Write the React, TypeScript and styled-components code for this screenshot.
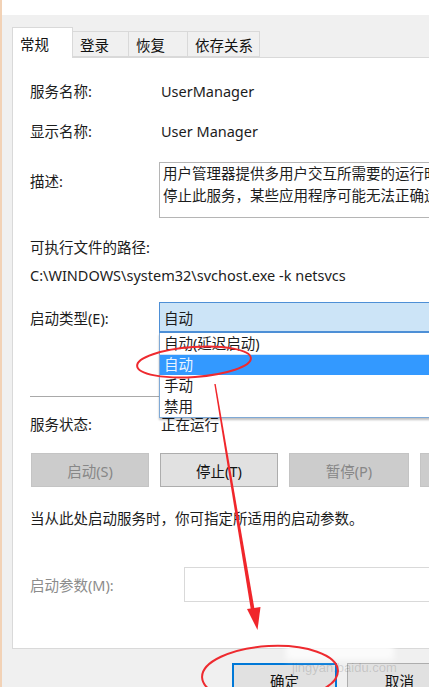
import React from 'react';
import styled, { createGlobalStyle } from 'styled-components';

const GlobalStyle = createGlobalStyle`
  html, body {
    margin: 0;
    padding: 0;
    background: #ffffff;
  }
  body {
    font-family: "Noto Sans", "Noto Sans CJK SC", sans-serif;
    font-size: 14.5px;
    color: #1c1c1c;
  }
`;

const Window = styled.div`
  position: relative;
  width: 429px;
  height: 687px;
  overflow: hidden;
  box-sizing: border-box;
  background: #f0f0f0;
  border-left: 2px solid #f2d2b6;
  display: flex;
  flex-direction: column;
`;

const TopStrip = styled.div`
  height: 15px;
  flex-shrink: 0;
  background: #ffffff;
`;

const TabBar = styled.div`
  display: flex;
  align-items: flex-end;
  margin-top: 12px;
  padding-left: 10px;
  height: 30px;
  flex-shrink: 0;
`;

const Tab = styled.div<{ $active?: boolean; $width: number }>`
  position: relative;
  z-index: ${p => (p.$active ? 2 : 1)};
  box-sizing: border-box;
  width: ${p => p.$width}px;
  height: ${p => (p.$active ? 31 : 26)}px;
  margin-bottom: ${p => (p.$active ? -1 : 0)}px;
  margin-left: ${p => (p.$active ? 0 : -1)}px;
  padding-left: 7px;
  display: flex;
  align-items: center;
  background: ${p => (p.$active ? '#ffffff' : '#f0f0f0')};
  border: 1px solid #d9d9d9;
  border-bottom: ${p => (p.$active ? 'none' : '1px solid #d9d9d9')};
  color: #111111;
  white-space: nowrap;
  &:first-child {
    margin-left: 0;
  }
`;

const Panel = styled.div`
  box-sizing: border-box;
  flex-shrink: 0;
  width: 480px;
  height: 592px;
  margin-left: 10px;
  padding: 23px 0 0 17px;
  background: #ffffff;
  border: 1px solid #d9d9d9;
  display: flex;
  flex-direction: column;
`;

const Row = styled.div<{ $gap?: number; $label?: number; $align?: string }>`
  display: grid;
  grid-template-columns: ${p => p.$label ?? 129}px 1fr;
  align-items: ${p => p.$align ?? 'center'};
  margin-top: ${p => p.$gap ?? 0}px;
`;

const Label = styled.div<{ $muted?: boolean; $pad?: number }>`
  line-height: 20px;
  white-space: nowrap;
  padding-top: ${p => p.$pad ?? 0}px;
  color: ${p => (p.$muted ? '#8c8c8c' : '#1c1c1c')};
`;

const Value = styled.div`
  line-height: 20px;
  padding-left: 2px;
  white-space: nowrap;
`;

const Line = styled.div<{ $gap?: number }>`
  line-height: 20px;
  white-space: nowrap;
  margin-top: ${p => p.$gap ?? 0}px;
`;

const TextBox = styled.div`
  box-sizing: border-box;
  width: 320px;
  height: 56px;
  padding: 0 3px;
  border: 1px solid #b5b5b5;
  line-height: 21.5px;
  overflow: hidden;
  white-space: nowrap;
`;

const SelectWrap = styled.div`
  position: relative;
  z-index: 3;
  width: 320px;
`;

const SelectBox = styled.div`
  box-sizing: border-box;
  height: 31px;
  padding-left: 4px;
  display: flex;
  align-items: center;
  background: #cce4f7;
  border: 1px solid #4d8fd6;
  border-bottom-width: 2px;
`;

const DropList = styled.div`
  position: absolute;
  top: 100%;
  left: 0;
  right: 0;
  background: #ffffff;
  border: 1px solid #7fa9d6;
  border-top: none;
  box-shadow: 0 2px 2px rgba(0, 0, 0, 0.25);
`;

const DropItem = styled.div<{ $selected?: boolean }>`
  height: 21px;
  line-height: 21px;
  padding-left: 4px;
  background: ${p => (p.$selected ? '#3399ff' : '#ffffff')};
  color: ${p => (p.$selected ? '#eaf4ff' : '#1c1c1c')};
  box-shadow: ${p => (p.$selected ? 'inset 0 1px 0 #cfe3f7' : 'none')};
`;

const Separator = styled.div`
  height: 1px;
  margin-top: 63px;
  background: #a9a9a9;
`;

const ButtonRow = styled.div<{ $gap: number }>`
  display: flex;
  gap: 11px;
  margin-top: ${p => p.$gap}px;
  padding-left: 1px;
`;

const ActionButton = styled.div<{ $disabled?: boolean; $width?: number }>`
  box-sizing: border-box;
  flex-shrink: 0;
  width: ${p => p.$width ?? 118}px;
  height: 34px;
  display: flex;
  align-items: center;
  justify-content: center;
  background: ${p => (p.$disabled ? '#cccccc' : '#e1e1e1')};
  border: 1px solid ${p => (p.$disabled ? '#c4c4c4' : '#adadad')};
  color: ${p => (p.$disabled ? '#878787' : '#111111')};
`;

const ParamInput = styled.div`
  box-sizing: border-box;
  width: 300px;
  height: 35px;
  border: 1px solid #d9d9d9;
  background: #ffffff;
`;

const Footer = styled.div`
  display: flex;
  gap: 10px;
  margin-top: 14px;
  padding-left: 230px;
`;

const DialogButton = styled.div<{ $default?: boolean }>`
  box-sizing: border-box;
  flex-shrink: 0;
  width: 105px;
  height: 34px;
  display: flex;
  align-items: center;
  justify-content: center;
  background: #e1e1e1;
  border: ${p => (p.$default ? '2px solid #0078d7' : '1px solid #adadad')};
  color: #111111;
`;

const Watermark = styled.div`
  position: absolute;
  left: 284px;
  top: 624px;
  width: 108px;
  height: 36px;
  background: rgba(255, 255, 255, 0.75);
  filter: blur(3px);
  z-index: 8;
`;

const WatermarkText = styled.div`
  position: absolute;
  left: 290px;
  top: 660px;
  font-family: "Liberation Sans", sans-serif;
  font-size: 13px;
  color: rgba(60, 60, 60, 0.18);
  z-index: 9;
`;

const Annotation = styled.svg`
  position: absolute;
  left: 0;
  top: 0;
  z-index: 10;
  pointer-events: none;
`;

export default function App() {
  return (
    <>
      <GlobalStyle />
      <Window>
        <TopStrip />
        <TabBar>
          <Tab $active $width={61}>常规</Tab>
          <Tab $width={57}>登录</Tab>
          <Tab $width={60}>恢复</Tab>
          <Tab $width={73}>依存关系</Tab>
        </TabBar>
        <Panel>
          <Row>
            <Label>服务名称:</Label>
            <Value>UserManager</Value>
          </Row>
          <Row $gap={20}>
            <Label>显示名称:</Label>
            <Value>User Manager</Value>
          </Row>
          <Row $gap={21} $align="start">
            <Label $pad={9}>描述:</Label>
            <TextBox>
              <div>用户管理器提供多用户交互所需要的运行时组件。如果</div>
              <div>停止此服务，某些应用程序可能无法正确运行。</div>
            </TextBox>
          </Row>
          <Line $gap={19}>可执行文件的路径:</Line>
          <Line $gap={8}>{'C:\\WINDOWS\\system32\\svchost.exe -k netsvcs'}</Line>
          <Row $gap={17}>
            <Label>启动类型(E):</Label>
            <SelectWrap>
              <SelectBox>自动</SelectBox>
              <DropList>
                <DropItem>自动(延迟启动)</DropItem>
                <DropItem $selected>自动</DropItem>
                <DropItem>手动</DropItem>
                <DropItem>禁用</DropItem>
              </DropList>
            </SelectWrap>
          </Row>
          <Separator />
          <Row $gap={17}>
            <Label>服务状态:</Label>
            <Value>正在运行</Value>
          </Row>
          <ButtonRow $gap={19}>
            <ActionButton $disabled>启动(S)</ActionButton>
            <ActionButton>停止(T)</ActionButton>
            <ActionButton $disabled $width={120}>暂停(P)</ActionButton>
            <ActionButton $disabled>恢复(R)</ActionButton>
          </ButtonRow>
          <Line $gap={21}>当从此处启动服务时，你可指定所适用的启动参数。</Line>
          <Row $gap={39} $label={154}>
            <Label $muted>启动参数(M):</Label>
            <ParamInput />
          </Row>
        </Panel>
        <Footer>
          <DialogButton $default>确定</DialogButton>
          <DialogButton>取消</DialogButton>
        </Footer>
        <Watermark />
        <WatermarkText>jingyan.baidu.com</WatermarkText>
        <Annotation width="429" height="687" viewBox="0 0 429 687">
          <ellipse
            cx="192"
            cy="362"
            rx="57"
            ry="15"
            transform="rotate(-4 192 362)"
            fill="none"
            stroke="#ee2a2f"
            strokeWidth="2"
          />
          <polygon points="212.3,384 213.7,384 253,612 249.2,612" fill="#f0262b" />
          <polygon points="245,609 258.5,607 255.5,630" fill="#f0262b" />
          <ellipse
            cx="268"
            cy="674"
            rx="68"
            ry="28"
            transform="rotate(-3 268 674)"
            fill="none"
            stroke="#ee2a2f"
            strokeWidth="2"
          />
        </Annotation>
      </Window>
    </>
  );
}
